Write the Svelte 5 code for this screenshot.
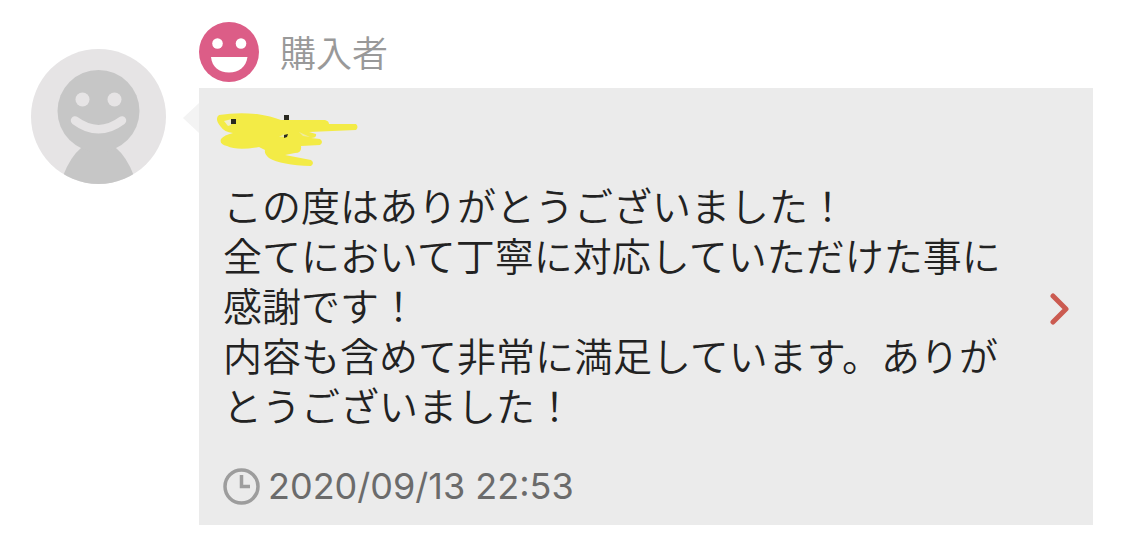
<script>
  // One feedback entry: who rated, what they wrote, and when.
  const review = {
    role: '購入者',
    message: [
      'この度はありがとうございました！',
      '全てにおいて丁寧に対応していただけた事に感謝です！',
      '内容も含めて非常に満足しています。ありがとうございました！',
    ].join('\n'),
    date: '2020/09/13 22:53',
    datetime: '2020-09-13T22:53',
  };
</script>

<article class="review">
  <svg class="avatar" viewBox="0 0 135 135" aria-hidden="true">
    <defs>
      <clipPath id="avatar-clip"><circle cx="67.5" cy="67.5" r="67.5" /></clipPath>
    </defs>
    <g clip-path="url(#avatar-clip)">
      <rect width="135" height="135" fill="#e6e4e5" />
      <path d="M51 98 Q39 108 32 127 L32 135 L104 135 L103 127 Q96 108 84 98 Z" fill="#c6c6c6" />
      <circle cx="67.5" cy="62" r="41" fill="#c6c6c6" />
      <circle cx="51.5" cy="50.5" r="7" fill="#e6e4e5" />
      <circle cx="83.5" cy="50.5" r="7" fill="#e6e4e5" />
      <path d="M44 71.5 Q67.5 89 91 71.5" fill="none" stroke="#e6e4e5" stroke-width="8.5" stroke-linecap="round" />
    </g>
  </svg>

  <div class="main">
    <header>
      <svg class="face" viewBox="0 0 60 60" aria-hidden="true">
        <circle cx="30" cy="30" r="30" fill="#dc5d87" />
        <circle cx="18.5" cy="21.5" r="5.3" fill="#fff" />
        <circle cx="42" cy="21.5" r="5.3" fill="#fff" />
        <path d="M12 35 H48.5 C47 45 40 50.5 30 50.5 C20 50.5 13 45 12 35 Z" fill="#fff" />
      </svg>
      <span class="role">{review.role}</span>
    </header>

    <a class="bubble" href="#review">
      <div class="body">
        <svg class="marker" viewBox="0 0 148 54" aria-hidden="true">
          <path
            d="M4 3 Q22 0 42 2 Q56 4 66 8 L110 8 Q114 9 114 12 L141 12 Q144 15 141 18 L94 20 L101 22 Q102 26 96 26 L105 27 Q109 30 105 33 L86 34 Q87 41 80 41 L70 43 L96 48 Q100 51 96 54 Q66 53 54 46 Q49 42 50 38 L44 35 Q22 39 12 34 Q4 32 6 27 Q9 23 18 21 Q9 20 6 15 Q-1 7 4 3 Z"
            fill="#f3eb46"
          />
          <path d="M9 9 L17 7 L16 13 L13 14 Z" fill="#f0edcb" />
          <path d="M84 20 L95 25 L88 24 Z" fill="#eeeba0" />
          <path d="M64 25 L69 22 L69 25 Z" fill="#eeeba0" />
          <rect x="16" y="7" width="5" height="5" fill="#29291f" />
          <rect x="69" y="3" width="5" height="5" fill="#29291f" />
          <path d="M69 23 L73 22 L72 25 L69 26 Z" fill="#29291f" />
        </svg>

        <p class="message">{review.message}</p>

        <div class="posted">
          <svg class="clock" viewBox="0 0 37 37" aria-hidden="true">
            <circle cx="18.5" cy="18.5" r="16.5" />
            <path d="M18.5 7 V18.5 H27" />
          </svg>
          <time datetime={review.datetime}>{review.date}</time>
        </div>
      </div>

      <svg class="chevron" viewBox="0 0 20 32" aria-hidden="true">
        <path d="M4 3 L17 16 L4 29" />
      </svg>
    </a>
  </div>
</article>

<style>
  :global(body) {
    margin: 0;
    background: #fff;
  }

  .review {
    display: flex;
    align-items: flex-start;
    gap: 33px;
    padding: 22px 29px 29px 31px;
    font-family: Inter, 'Noto Sans CJK JP', sans-serif;
  }

  .avatar {
    flex: none;
    width: 135px;
    height: 135px;
    margin-top: 27px;
  }

  .main {
    flex: 1;
    min-width: 0;
  }

  header {
    display: flex;
    align-items: center;
    gap: 21px;
    margin-bottom: 6px;
  }

  .face {
    width: 60px;
    height: 60px;
  }

  .role {
    color: #999;
    font-family: 'Noto Sans CJK JP', sans-serif;
    font-size: 36px;
    font-weight: 350;
    line-height: 50px;
    padding-bottom: 3px;
  }

  .bubble {
    position: relative;
    display: flex;
    align-items: center;
    gap: 24px;
    padding: 24px 24px 20px;
    background: #ebebeb;
    color: #222;
    text-decoration: none;
  }

  /* Tail pointing at the avatar */
  .bubble::before {
    content: '';
    position: absolute;
    top: 15px;
    right: 100%;
    border: solid transparent;
    border-width: 15px 16px 15px 0;
    border-right-color: #f3f3f3;
  }

  .body {
    flex: 1;
    min-width: 0;
  }

  .marker {
    display: block;
    width: 148px;
    height: 54px;
    margin-left: -8px;
  }

  .message {
    margin: 13px 0 39px;
    font-family: 'Noto Sans CJK JP', sans-serif;
    font-size: 39px;
    font-weight: 350;
    line-height: 50px;
    white-space: pre-line;
  }

  .posted {
    display: flex;
    align-items: center;
    gap: 8px;
    color: #6b6b6b;
    font-size: 36px;
    font-weight: 400;
    line-height: 37px;
  }

  .clock {
    width: 37px;
    height: 37px;
    fill: none;
    stroke: #9d9d9d;
    stroke-width: 3.5;
  }

  .chevron {
    flex: none;
    width: 20px;
    height: 32px;
    fill: none;
    stroke: #cb5b51;
    stroke-width: 5;
    stroke-linecap: round;
    stroke-linejoin: round;
  }
</style>
